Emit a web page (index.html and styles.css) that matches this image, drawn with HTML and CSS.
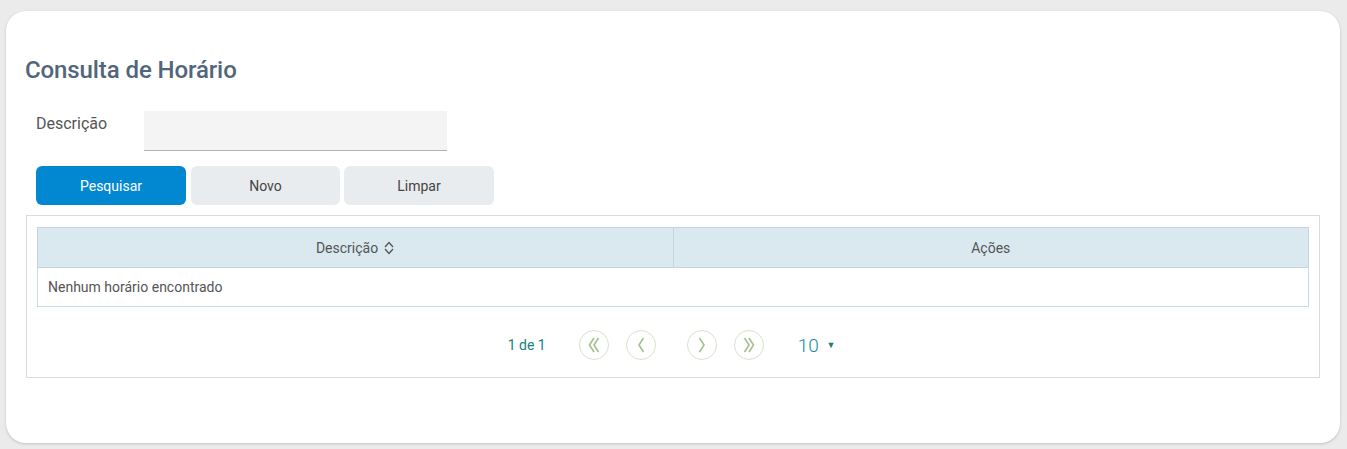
FILE: index.html
```html
<!DOCTYPE html>
<html lang="pt">
<head>
<meta charset="utf-8">
<title>Consulta de Horário</title>
<link rel="stylesheet" href="styles.css">
</head>
<body>
<div class="card">
  <h1 class="title">Consulta de Horário</h1>
  <div class="field">
    <label class="label">Descrição</label>
    <div class="input"></div>
  </div>
  <div class="actions">
    <button class="btn primary">Pesquisar</button>
    <button class="btn novo">Novo</button>
    <button class="btn limpar">Limpar</button>
  </div>
  <div class="panel">
    <table class="grid">
      <thead>
        <tr>
          <th class="col-desc">Descrição <svg class="sort" width="12" height="14" viewBox="0 0 12 14"><path d="M2 6 L6 1.5 L10 6 M2 8 L6 12.5 L10 8" fill="none" stroke="#555" stroke-width="1.3"/></svg></th>
          <th>Ações</th>
        </tr>
      </thead>
      <tbody>
        <tr><td colspan="2">Nenhum horário encontrado</td></tr>
      </tbody>
    </table>
    <div class="pager">
      <span class="pages">1 de 1</span>
      <span class="pbtn first"><svg width="16" height="18" viewBox="0 0 16 18"><path d="M8 2 L3.5 9 L8 16 M12.5 2 L8 9 L12.5 16" fill="none" stroke="#a9c191" stroke-width="1.7"/></svg></span>
      <span class="pbtn prev"><svg width="16" height="18" viewBox="0 0 16 18"><path d="M10.5 2 L6 9 L10.5 16" fill="none" stroke="#a9c191" stroke-width="1.7"/></svg></span>
      <span class="pbtn next"><svg width="16" height="18" viewBox="0 0 16 18"><path d="M5.5 2 L10 9 L5.5 16" fill="none" stroke="#a9c191" stroke-width="1.7"/></svg></span>
      <span class="pbtn last"><svg width="16" height="18" viewBox="0 0 16 18"><path d="M3.5 2 L8 9 L3.5 16 M8 2 L12.5 9 L8 16" fill="none" stroke="#a9c191" stroke-width="1.7"/></svg></span>
      <span class="size">10 <span class="caret">▼</span></span>
    </div>
  </div>
</div>
</body>
</html>
```
FILE: styles.css
```css
html, body {
  margin: 0;
  padding: 0;
  background: #ebebeb;
  font-family: Roboto, "Liberation Sans", Arial, sans-serif;
}
body {
  padding: 11px 7px 6px 6px;
}
.card {
  background: #fff;
  border-radius: 20px;
  box-shadow: 0 1px 3px rgba(0,0,0,0.18);
  height: 432px;
  box-sizing: border-box;
  padding: 44px 20px 0 20px;
}
.title {
  margin: 0 0 0 -1px;
  font-size: 24px;
  font-weight: 500;
  color: #51667a;
  line-height: 30px;
  letter-spacing: -0.1px;
}
.field {
  display: flex;
  align-items: flex-start;
  margin-top: 26px;
  padding-left: 10px;
}
.label {
  width: 108px;
  font-size: 16px;
  color: #555;
  line-height: 20px;
  padding-top: 3px;
}
.input {
  width: 303px;
  height: 40px;
  background: #f4f4f4;
  border-bottom: 1px solid #a9b4bb;
  box-sizing: border-box;
}
.actions {
  display: flex;
  gap: 5px;
  margin-top: 15px;
  padding-left: 10px;
}
.btn {
  width: 150px;
  height: 39px;
  border: none;
  border-radius: 6px;
  background: #e9ecef;
  color: #444;
  font-family: inherit;
  font-size: 14px;
}
.btn.novo { width: 149px; }
.btn.limpar { margin-left: -1px; }
.btn.primary {
  background: #0288d1;
  color: #fff;
}
.panel {
  margin-top: 10px;
  border: 1px solid #dcdcdc;
  height: 163px;
  box-sizing: border-box;
  padding: 11px 10px 0 10px;
}
.grid {
  width: 100%;
  border-collapse: collapse;
  font-size: 14px;
  color: #555;
}
.grid th {
  background: #dae8f0;
  border: 1px solid #c2d6e0;
  height: 39px;
  font-weight: 400;
  padding: 0;
}
.grid th.col-desc { width: 50%; }
.sort {
  vertical-align: -2px;
  margin-left: 1px;
}
.grid td {
  border: 1px solid #c9dce5;
  height: 38px;
  padding: 0 10px;
}
.pager {
  display: flex;
  align-items: center;
  justify-content: center;
  margin-top: 23px;
  padding-right: 3px;
}
.pages {
  color: #1b7f80;
  font-size: 14px;
  margin-right: 33px;
}
.pbtn {
  width: 30px;
  height: 30px;
  border: 1px solid #d8e3cc;
  border-radius: 50%;
  box-sizing: border-box;
  display: flex;
  align-items: center;
  justify-content: center;
}
.pbtn.prev { margin-left: 17px; }
.pbtn.next { margin-left: 31px; }
.pbtn.last { margin-left: 17px; }
.size {
  margin-left: 34px;
  font-size: 19px;
  font-weight: 300;
  color: #1d8a9a;
}
.caret {
  font-size: 9px;
  color: #1b7f70;
  vertical-align: 4px;
  margin-left: 3px;
}
```
